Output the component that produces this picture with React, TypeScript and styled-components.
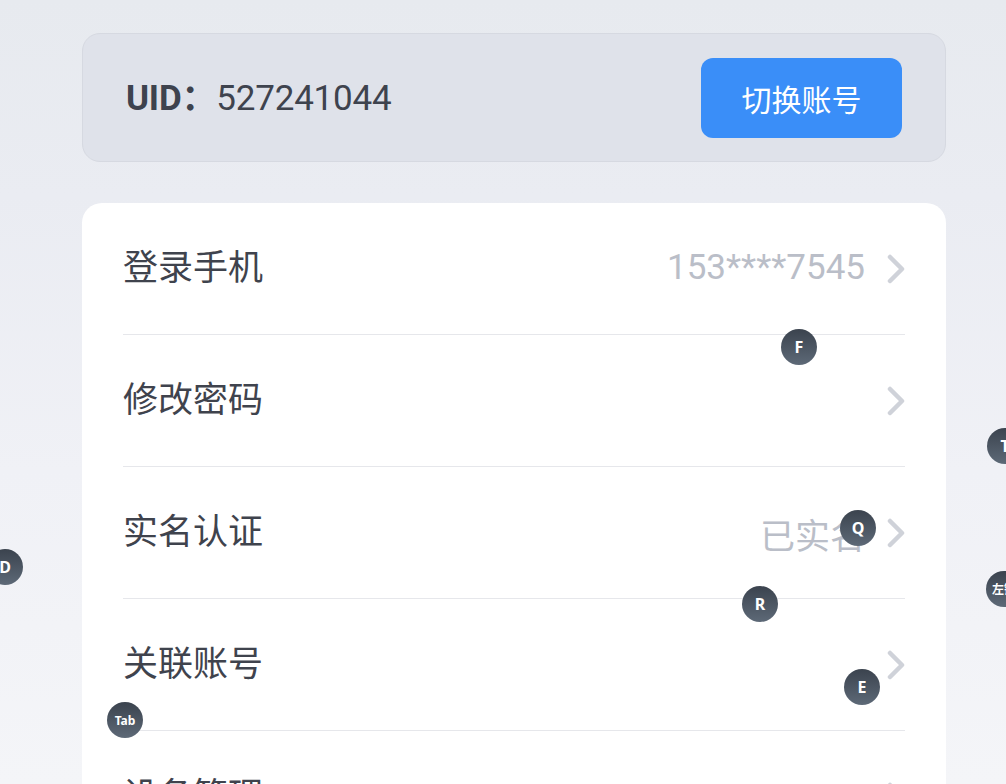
import React from "react";
import styled, { createGlobalStyle } from "styled-components";

const GlobalStyle = createGlobalStyle`
  html, body {
    margin: 0;
    padding: 0;
    height: 100%;
    overflow: hidden;
  }
  body {
    font-family: Roboto, "Noto Sans CJK SC", "Noto Sans", sans-serif;
    background: linear-gradient(180deg, #e7eaef 0%, #eaecf2 25%, #f0f1f6 60%, #f4f5f8 100%);
  }
`;

const Page = styled.div`
  position: relative;
  width: 1006px;
  height: 784px;
  overflow: hidden;
`;

const Column = styled.div`
  width: 864px;
  margin-left: 82px;
  padding-top: 33px;
  display: flex;
  flex-direction: column;
  gap: 41px;
`;

const UidCard = styled.div`
  box-sizing: border-box;
  height: 129px;
  display: flex;
  align-items: center;
  justify-content: space-between;
  padding: 0 43px 0 43px;
  background: #dfe2ea;
  border: 1px solid #d6d9e1;
  border-radius: 18px;
`;

const UidText = styled.div`
  font-size: 35px;
  color: #3e434e;
  letter-spacing: -0.2px;
  padding-bottom: 7px;

  b {
    font-weight: 700;
  }
`;

const SwitchButton = styled.button`
  width: 201px;
  height: 80px;
  border: none;
  border-radius: 12px;
  background: #3a8ef8;
  color: #fff;
  font-family: "Noto Sans CJK SC", sans-serif;
  font-size: 30px;
  cursor: pointer;
  margin-top: 1px;
`;

const ListCard = styled.div`
  background: #fff;
  border-radius: 20px;
  padding: 0 41px;
`;

const Row = styled.div`
  height: 131px;
  display: flex;
  align-items: center;
  border-bottom: 1px solid #e6e7eb;
`;

const Label = styled.span`
  flex: 1;
  font-family: "Noto Sans CJK SC", sans-serif;
  font-size: 35px;
  color: #3f434d;
  padding-bottom: 8px;
`;

const Value = styled.span<{ $cjk?: boolean }>`
  margin-right: 22px;
  font-family: ${(p) => (p.$cjk ? `"Noto Sans CJK SC", sans-serif` : `Roboto, sans-serif`)};
  font-size: 35px;
  color: #babec8;
  padding-top: ${(p) => (p.$cjk ? "2px" : "0")};
  padding-bottom: ${(p) => (p.$cjk ? "0" : "2px")};
`;

const Chevron = () => (
  <svg width="18" height="30" viewBox="0 0 18 30">
    <path
      d="M3 3 L15 15 L3 27"
      fill="none"
      stroke="#cfd2d9"
      strokeWidth="4.5"
      strokeLinecap="round"
      strokeLinejoin="round"
    />
  </svg>
);

const Badge = styled.div<{ $x: number; $y: number; $small?: boolean }>`
  position: absolute;
  left: ${(p) => p.$x - 18}px;
  top: ${(p) => p.$y - 18}px;
  width: 36px;
  height: 36px;
  border-radius: 50%;
  background: linear-gradient(180deg, #3b434e 0%, #5d6977 100%);
  color: #fff;
  display: flex;
  align-items: center;
  justify-content: center;
  font-family: "Noto Sans", "Noto Sans CJK SC", sans-serif;
  font-weight: 700;
  font-size: ${(p) => (p.$small ? "12px" : "16px")};
  white-space: nowrap;
  overflow: hidden;
`;

const rows = [
  { label: "登录手机", value: "153****7545" },
  { label: "修改密码" },
  { label: "实名认证", value: "已实名", cjk: true },
  { label: "关联账号" },
  { label: "设备管理" },
];

const badges = [
  { key: "F", x: 799, y: 347 },
  { key: "Q", x: 858, y: 528 },
  { key: "R", x: 760, y: 604 },
  { key: "E", x: 862, y: 687 },
  { key: "Tab", x: 125, y: 720, small: true },
  { key: "D", x: 5, y: 567 },
  { key: "T", x: 1005, y: 446 },
  { key: "左键", x: 1004, y: 589, small: true },
];

export default function App() {
  return (
    <Page>
      <GlobalStyle />
      <Column>
        <UidCard>
          <UidText>
            <b>UID：</b>527241044
          </UidText>
          <SwitchButton>切换账号</SwitchButton>
        </UidCard>
        <ListCard>
          {rows.map((r) => (
            <Row key={r.label}>
              <Label>{r.label}</Label>
              {r.value && <Value $cjk={r.cjk}>{r.value}</Value>}
              <Chevron />
            </Row>
          ))}
        </ListCard>
      </Column>
      {badges.map((b) => (
        <Badge key={b.key} $x={b.x} $y={b.y} $small={b.small}>
          {b.key}
        </Badge>
      ))}
    </Page>
  );
}
